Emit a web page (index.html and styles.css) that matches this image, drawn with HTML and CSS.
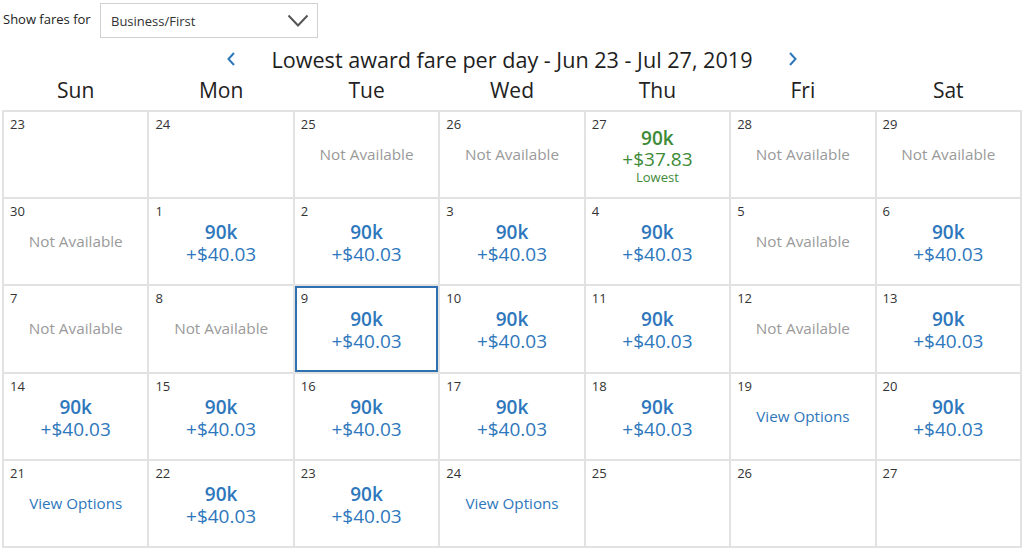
FILE: index.html
```html
<!DOCTYPE html>
<html>
<head>
<meta charset="utf-8">
<link rel="stylesheet" href="styles.css">
</head>
<body>
<div class="page">
  <div class="filter">
    <span class="filter-label">Show fares for</span>
    <div class="select">
      <span>Business/First</span>
      <svg class="chev" width="22" height="14" viewBox="0 0 22 14"><path d="M1.5 1.5 L11 11.5 L20.5 1.5" fill="none" stroke="#555" stroke-width="2"/></svg>
    </div>
  </div>
  <div class="title-row">
    <svg class="arrow" width="10" height="16" viewBox="0 0 10 16"><path d="M8 2 L2.5 8 L8 14" fill="none" stroke="#2e77bc" stroke-width="2"/></svg>
    <h1 class="title">Lowest award fare per day - Jun 23 - Jul 27, 2019</h1>
    <svg class="arrow" width="10" height="16" viewBox="0 0 10 16"><path d="M2 2 L7.5 8 L2 14" fill="none" stroke="#2e77bc" stroke-width="2"/></svg>
  </div>
  <div class="days">
    <div>Sun</div><div>Mon</div><div>Tue</div><div>Wed</div><div>Thu</div><div>Fri</div><div>Sat</div>
  </div>
  <div class="grid">
    <div class="cell"><span class="num">23</span></div>
    <div class="cell"><span class="num">24</span></div>
    <div class="cell"><span class="num">25</span><span class="na">Not Available</span></div>
    <div class="cell"><span class="num">26</span><span class="na">Not Available</span></div>
    <div class="cell low"><span class="num">27</span><span class="miles">90k</span><span class="tax">+$37.83</span><span class="lowest">Lowest</span></div>
    <div class="cell"><span class="num">28</span><span class="na">Not Available</span></div>
    <div class="cell"><span class="num">29</span><span class="na">Not Available</span></div>

    <div class="cell"><span class="num">30</span><span class="na">Not Available</span></div>
    <div class="cell"><span class="num">1</span><span class="miles">90k</span><span class="tax">+$40.03</span></div>
    <div class="cell"><span class="num">2</span><span class="miles">90k</span><span class="tax">+$40.03</span></div>
    <div class="cell"><span class="num">3</span><span class="miles">90k</span><span class="tax">+$40.03</span></div>
    <div class="cell"><span class="num">4</span><span class="miles">90k</span><span class="tax">+$40.03</span></div>
    <div class="cell"><span class="num">5</span><span class="na">Not Available</span></div>
    <div class="cell"><span class="num">6</span><span class="miles">90k</span><span class="tax">+$40.03</span></div>

    <div class="cell"><span class="num">7</span><span class="na">Not Available</span></div>
    <div class="cell"><span class="num">8</span><span class="na">Not Available</span></div>
    <div class="cell selected"><span class="num">9</span><span class="miles">90k</span><span class="tax">+$40.03</span></div>
    <div class="cell"><span class="num">10</span><span class="miles">90k</span><span class="tax">+$40.03</span></div>
    <div class="cell"><span class="num">11</span><span class="miles">90k</span><span class="tax">+$40.03</span></div>
    <div class="cell"><span class="num">12</span><span class="na">Not Available</span></div>
    <div class="cell"><span class="num">13</span><span class="miles">90k</span><span class="tax">+$40.03</span></div>

    <div class="cell"><span class="num">14</span><span class="miles">90k</span><span class="tax">+$40.03</span></div>
    <div class="cell"><span class="num">15</span><span class="miles">90k</span><span class="tax">+$40.03</span></div>
    <div class="cell"><span class="num">16</span><span class="miles">90k</span><span class="tax">+$40.03</span></div>
    <div class="cell"><span class="num">17</span><span class="miles">90k</span><span class="tax">+$40.03</span></div>
    <div class="cell"><span class="num">18</span><span class="miles">90k</span><span class="tax">+$40.03</span></div>
    <div class="cell"><span class="num">19</span><span class="view">View Options</span></div>
    <div class="cell"><span class="num">20</span><span class="miles">90k</span><span class="tax">+$40.03</span></div>

    <div class="cell"><span class="num">21</span><span class="view">View Options</span></div>
    <div class="cell"><span class="num">22</span><span class="miles">90k</span><span class="tax">+$40.03</span></div>
    <div class="cell"><span class="num">23</span><span class="miles">90k</span><span class="tax">+$40.03</span></div>
    <div class="cell"><span class="num">24</span><span class="view">View Options</span></div>
    <div class="cell"><span class="num">25</span></div>
    <div class="cell"><span class="num">26</span></div>
    <div class="cell"><span class="num">27</span></div>
  </div>
</div>
</body>
</html>
```
FILE: styles.css
```css
html, body {
  margin: 0;
  padding: 0;
  background: #fff;
}
body {
  font-family: "Open Sans", "Liberation Sans", sans-serif;
  color: #222;
}
.page {
  width: 1020px;
  padding: 3px 2px 0 2px;
}
.filter {
  display: flex;
  align-items: center;
  height: 35px;
}
.filter-label {
  font-size: 13px;
  color: #222;
  margin-left: 1px;
  width: 97px;
  margin-top: -3px;
}
.select {
  box-sizing: border-box;
  width: 218px;
  height: 35px;
  border: 1px solid #d0d0d0;
  display: flex;
  align-items: center;
  justify-content: space-between;
  padding: 0 8px 0 10px;
  font-size: 13px;
  color: #333;
}
.chev {
  display: block;
}
.title-row {
  display: flex;
  justify-content: center;
  align-items: center;
  gap: 35px;
  height: 28px;
  margin-top: 7px;
}
.title {
  margin: 0;
  font-size: 21.6px;
  font-weight: 400;
  color: #1e1e1e;
}
.arrow {
  display: block;
}
.days {
  display: grid;
  grid-template-columns: repeat(7, 1fr);
  padding: 0 2px;
  gap: 2px;
  height: 37px;
  align-items: start;
}
.days div {
  text-align: center;
  font-size: 21px;
  color: #222;
  line-height: 30px;
  padding-top: 2px;
}
.grid {
  display: grid;
  grid-template-columns: repeat(7, 1fr);
  grid-template-rows: repeat(5, 85.2px);
  gap: 2px;
  padding: 2px;
  background: #e2e2e2;
}
.cell {
  background: #fff;
  display: flex;
  flex-direction: column;
  align-items: center;
  padding: 3px 6px 0 6px;
  box-sizing: border-box;
}
.num {
  align-self: flex-start;
  font-size: 13px;
  color: #333;
  line-height: 18px;
}
.miles {
  font-size: 19px;
  font-weight: 600;
  color: #2e77bc;
  line-height: 22px;
  margin-top: 1px;
}
.tax {
  font-size: 19px;
  color: #2e77bc;
  line-height: 22px;
}
.low .miles, .low .tax, .low .lowest {
  color: #3d8a37;
}
.low .miles {
  margin-top: -6px;
}
.low .tax {
  line-height: 20px;
}
.lowest {
  font-size: 13px;
  line-height: 16px;
}
.na {
  font-size: 15.3px;
  color: #9a9a9a;
  margin-top: 11px;
  line-height: 20px;
}
.view {
  font-size: 15.2px;
  color: #2e77bc;
  margin-top: 11px;
  line-height: 20px;
}
.selected {
  box-shadow: inset 0 0 0 2px #2f70b0;
}
```
